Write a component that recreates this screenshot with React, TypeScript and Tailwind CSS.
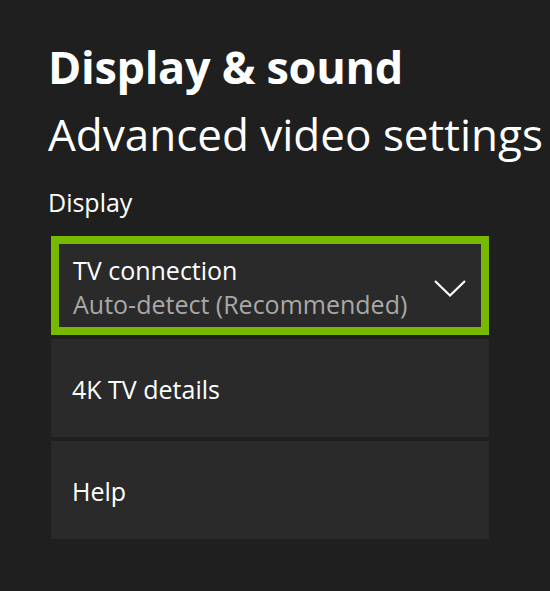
import React from 'react';

const items = ['4K TV details', 'Help'];

const App: React.FC = () => {
  return (
    <div
      className="w-[550px] h-[591px] bg-[#1f1f1f] text-white overflow-hidden pl-[48px] pt-[44px]"
      style={{ fontFamily: '"Open Sans", "Noto Sans", sans-serif' }}
    >
      <h1 className="text-[45px] leading-[45px] font-bold tracking-[-0.3px] whitespace-nowrap">
        Display &amp; sound
      </h1>
      <h2 className="mt-[23px] text-[44px] leading-[44px] font-normal whitespace-nowrap">
        Advanced video settings
      </h2>
      <div className="mt-[34px] text-[25px] leading-[25px]">Display</div>

      <div className="mt-[21px] ml-[3px] w-[438px] flex flex-col gap-[4px]">
        <button className="h-[99px] border-[8px] border-[#77b900] bg-[#2a2a2a] flex items-center justify-between pl-[14px] pr-[15px] text-left">
          <div className="pt-[2px]">
            <div className="text-[25px] leading-[34px]">TV connection</div>
            <div className="text-[25px] leading-[34px] text-[#a8a8a8]">Auto-detect (Recommended)</div>
          </div>
          <svg className="mt-[6px]" width="32" height="17" viewBox="0 0 32 17" fill="none">
            <path d="M1 1 L16 15.5 L31 1" stroke="white" strokeWidth="2.2" />
          </svg>
        </button>
        {items.map((label) => (
          <div
            key={label}
            className="h-[98px] bg-[#2a2a2a] flex items-center pl-[21px] pt-[2px] text-[25px] leading-[25px]"
          >
            {label}
          </div>
        ))}
      </div>
    </div>
  );
};

export default App;
